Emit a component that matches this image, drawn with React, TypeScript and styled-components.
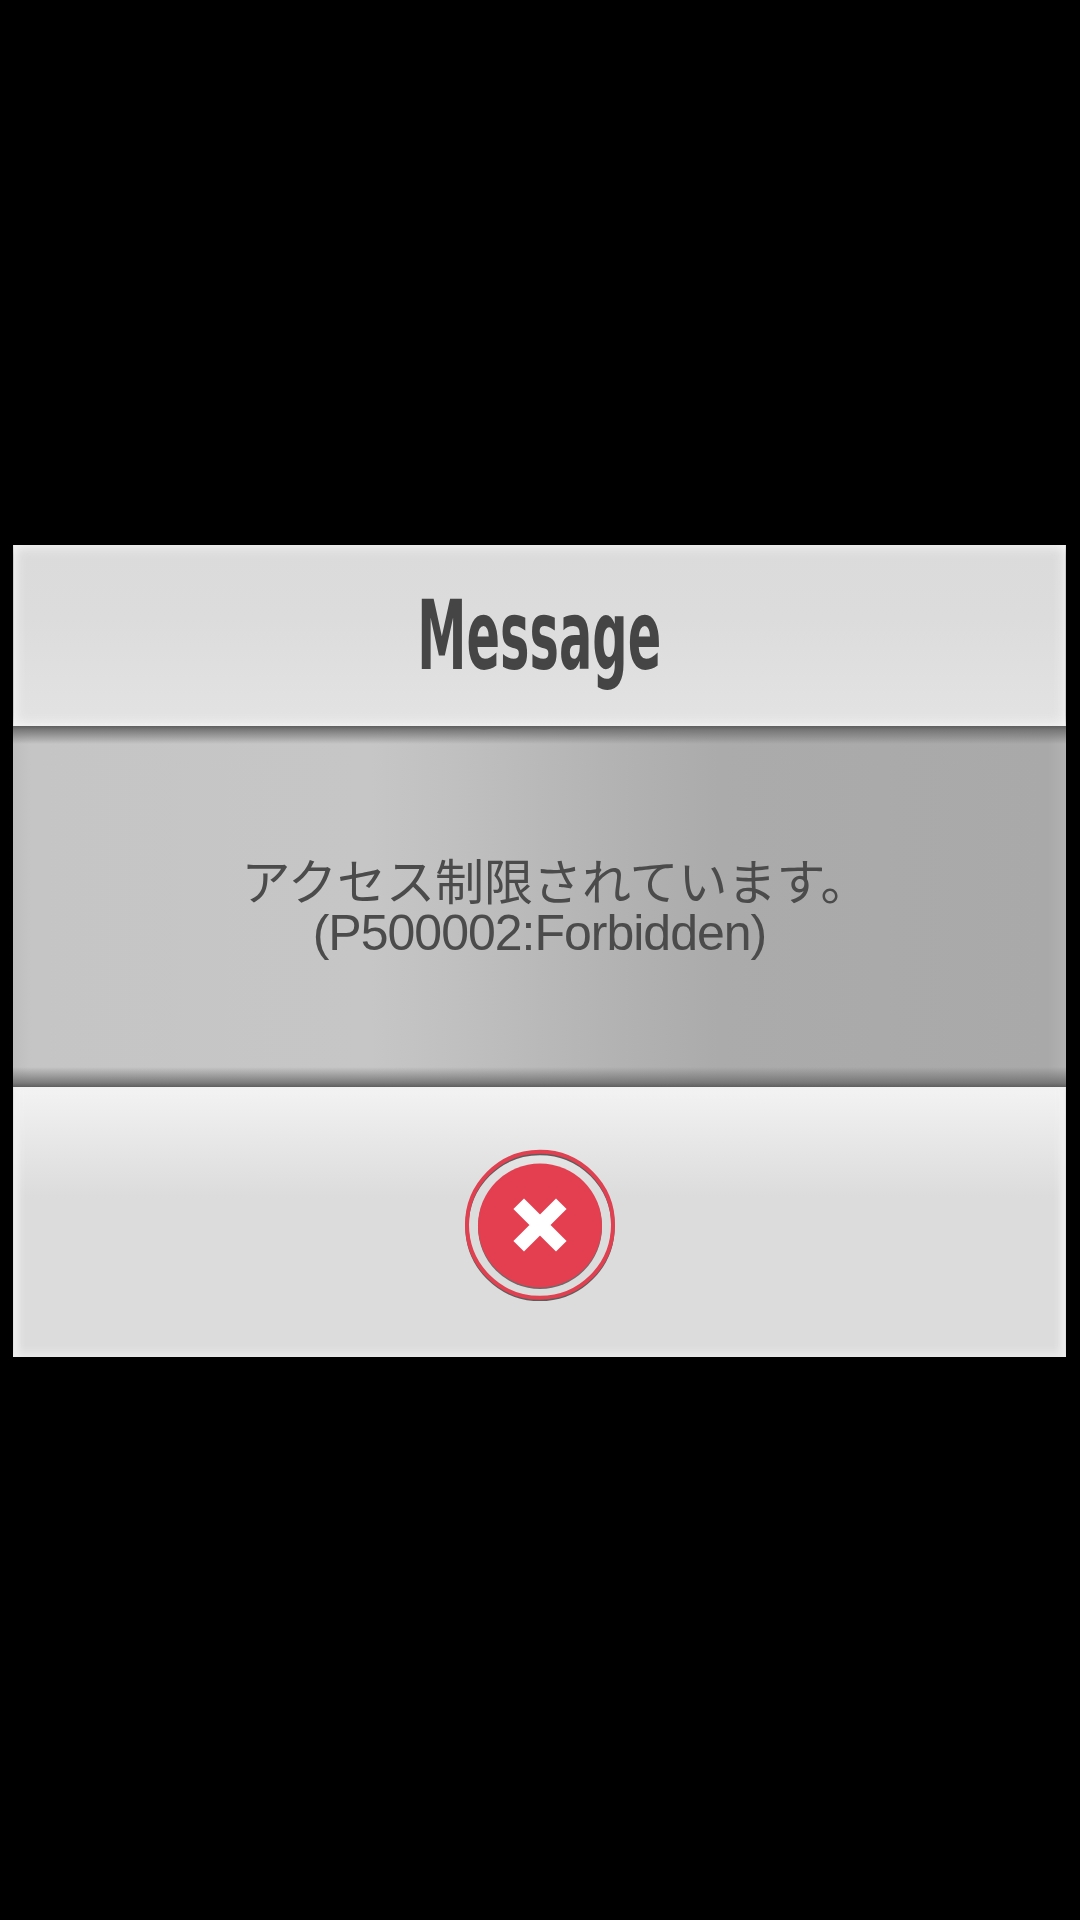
import React from 'react';
import styled, { createGlobalStyle } from 'styled-components';

const GlobalStyle = createGlobalStyle`
  html, body {
    margin: 0;
    padding: 0;
    background: #000;
  }
  body {
    font-family: "Liberation Sans", "Noto Sans CJK JP", sans-serif;
  }
`;

const Screen = styled.div`
  width: 1080px;
  height: 1920px;
  background: #000;
  padding: 545px 14px 0 13px;
  box-sizing: border-box;
`;

const Dialog = styled.div`
  display: flex;
  flex-direction: column;
  height: 812px;
`;

const Header = styled.div`
  height: 181px;
  box-sizing: border-box;
  display: flex;
  justify-content: center;
  padding-top: 36px;
  background: linear-gradient(180deg, #dbdbdb 0%, #dcdcdc 40%, #e3e3e3 100%);
  box-shadow: inset 0 0 12px 2px #f6f6f6, inset 1px 0 0 #8a8a8a, inset -1px 0 0 #8a8a8a;
`;

const Title = styled.h1`
  margin: 0;
  height: 110px;
  font-family: "DejaVu Sans", sans-serif;
  font-weight: 700;
  font-size: 97px;
  line-height: 110px;
  color: #454545;
  transform: scaleX(0.51);
  transform-origin: center top;
`;

const Body = styled.div`
  height: 361px;
  box-sizing: border-box;
  display: flex;
  flex-direction: column;
  align-items: center;
  padding-top: 132px;
  color: #4b4b4b;
  background:
    linear-gradient(180deg, #5e5e5e 0, rgba(110, 110, 110, 0.85) 4px, rgba(198, 198, 198, 0) 18px),
    linear-gradient(0deg, #5e5e5e 0, rgba(110, 110, 110, 0.85) 4px, rgba(198, 198, 198, 0) 20px),
    linear-gradient(90deg, #bebebe 0, #c5c5c5 18px, #c6c6c6 34%, #c0c0c0 42%, #b9b9b9 50%, #b2b2b2 58%, #ababab 67%, #a9a9a9 calc(100% - 18px), #b2b2b2 100%);
`;

const MessageLine = styled.p<{ $shift?: number }>`
  margin: 0;
  padding-left: ${({ $shift }) => $shift ?? 0}px;
  font-size: ${({ $shift }) => ($shift ? 49 : 50)}px;
  line-height: 50px;
  letter-spacing: ${({ $shift }) => ($shift ? 0 : -1)}px;
  white-space: nowrap;
`;

const Footer = styled.div`
  flex: 1;
  display: flex;
  justify-content: center;
  padding-top: 62px;
  background: linear-gradient(180deg, #f3f3f3 0, #e8e8e8 50px, #dcdcdc 110px, #dcdcdc 100%);
  box-shadow: inset 0 -4px 10px #ececec, inset 12px 0 10px -8px #f4f4f4, inset -12px 0 10px -8px #f4f4f4, inset 1px 0 0 #8a8a8a, inset -1px 0 0 #8a8a8a;
`;

const CloseButton = styled.button`
  width: 152px;
  height: 152px;
  padding: 0;
  border: 0;
  background: transparent;

  svg {
    display: block;
  }
`;

const App: React.FC = () => {
  return (
    <>
      <GlobalStyle />
      <Screen>
        <Dialog>
          <Header>
            <Title>Message</Title>
          </Header>
          <Body>
            <MessageLine $shift={32}>アクセス制限されています。</MessageLine>
            <MessageLine>(P500002:Forbidden)</MessageLine>
          </Body>
          <Footer>
            <CloseButton type="button" aria-label="close">
              <svg width="152" height="152" viewBox="0 0 152 152">
                <circle cx="76" cy="77.5" r="73" fill="none" stroke="#5c5c5c" strokeWidth="3.5" />
                <circle cx="76" cy="75.8" r="73" fill="none" stroke="#e0404f" strokeWidth="4" />
                <circle cx="76" cy="78" r="62" fill="#6a6a6a" />
                <circle cx="76" cy="76.5" r="62" fill="#e43f50" />
                <path d="M60 60 L92 92 M92 60 L60 92" stroke="#fff" strokeWidth="15" strokeLinecap="square" />
              </svg>
            </CloseButton>
          </Footer>
        </Dialog>
      </Screen>
    </>
  );
};

export default App;
